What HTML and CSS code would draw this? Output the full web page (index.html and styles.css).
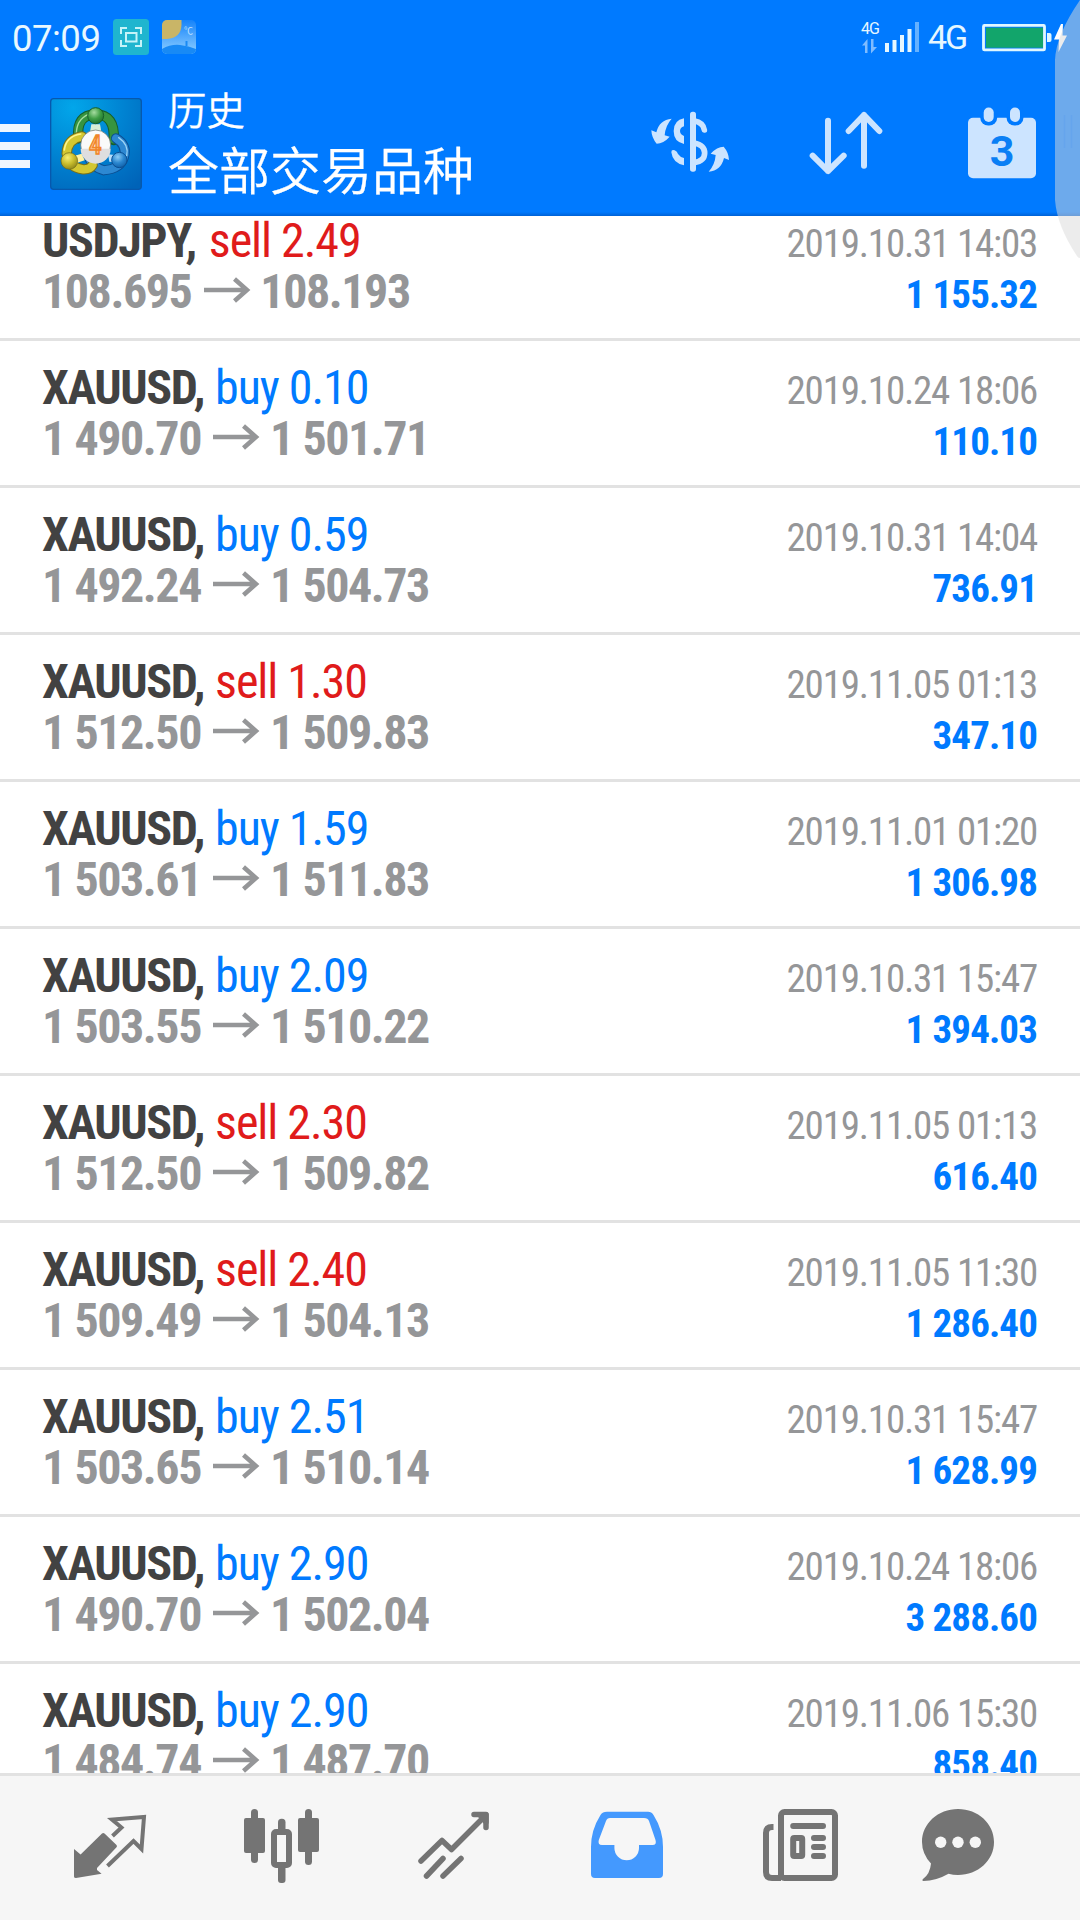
FILE: index.html
```html
<!DOCTYPE html>
<html lang="zh-CN">
<head>
<meta charset="utf-8">
<title>历史</title>
<link rel="stylesheet" href="styles.css">
</head>
<body>
<header class="header">
  <div class="status">
    <div class="status-left">
      <span class="clock">07:09</span>
      <svg class="badge-capture" viewBox="0 0 36 36"><rect width="36" height="36" rx="3.5" fill="#1fb5cf"/><g fill="none" stroke="#c5f3f8" stroke-width="2"><path d="M8 15V9h6M22 9h6v6M28 21v6h-6M14 27H8v-6"/><rect x="13" y="14" width="10.500" height="8.500"/></g></svg>
      <svg class="badge-weather" viewBox="0 0 34 34">
        <defs>
          <linearGradient id="sky" x1="0" y1="0" x2="0" y2="1"><stop offset="0" stop-color="#1683fa"/><stop offset=".85" stop-color="#7cc4ff"/></linearGradient>
          <clipPath id="wclip"><rect width="34" height="34" rx="5"/></clipPath>
        </defs>
        <g clip-path="url(#wclip)"><rect width="34" height="34" fill="url(#sky)"/><path d="M0 0H19.500V5Q19 18 5 19H0Z" fill="#c9b567"/><path d="M0 29Q9 24 18 25T34 29V34H0ZM23.500 21h2v5h-2z" fill="#188af5"/></g>
        <text x="22" y="13.500" class="degree">℃</text>
      </svg>
    </div>
    <div class="status-right">
      <div class="net"><span class="net-small">4G</span><svg width="16" height="15" viewBox="0 0 16 15" fill="#7fbcff"><path d="M0 6.500L5.500 0V14H3V6.500ZM15 8L9 14.500V0h2.500V8Z"/></svg></div>
      <svg class="bars" width="34" height="30" viewBox="0 0 34 30" fill="#e6f7ff"><path d="M0 21h4v9H0zM7.500 18h4v12h-4zM15 13h4v17h-4zM22.500 7h4v23h-4z"/><path d="M30 0h4v30h-4z" fill="#66b2ff"/></svg>
      <span class="net-big">4G</span>
      <svg class="battery" width="86" height="28" viewBox="982 24 86 28"><rect x="983.500" y="25.400" width="61" height="24.500" rx="1" fill="#007aff" stroke="#dff7ff" stroke-width="2.800"/><rect x="986" y="27.700" width="57" height="20" fill="#12a56b"/><path d="M1047 33h2.500q2 0 2 2v5q0 2-2 2H1047z" fill="#dff7ff"/><path d="M1061 24L1054 39.500H1059L1058.500 52L1067 35.500H1062.500L1063 24Z" fill="#fff"/></svg>
    </div>
  </div>
  <div class="toolbar">
    <div class="menu"><i></i><i></i><i></i></div>
    <svg class="logo" viewBox="30 39 276 276">
      <defs>
        <radialGradient id="lbg" cx=".25" cy=".1" r="1.1"><stop offset="0" stop-color="#02a6ea"/><stop offset=".5" stop-color="#0083d2"/><stop offset="1" stop-color="#0063b8"/></radialGradient>
        <radialGradient id="gg" cx=".4" cy=".3" r=".8"><stop offset="0" stop-color="#a5dca0"/><stop offset=".5" stop-color="#3f9e45"/><stop offset="1" stop-color="#17682a"/></radialGradient>
        <radialGradient id="yg" cx=".4" cy=".3" r=".8"><stop offset="0" stop-color="#f7ef72"/><stop offset=".5" stop-color="#c6bb2c"/><stop offset="1" stop-color="#837b18"/></radialGradient>
        <radialGradient id="bg" cx=".4" cy=".3" r=".8"><stop offset="0" stop-color="#8cccf5"/><stop offset=".5" stop-color="#2a86cf"/><stop offset="1" stop-color="#0b58a0"/></radialGradient>
      </defs>
      <rect x="32" y="41" width="272" height="272" rx="9" fill="url(#lbg)" stroke="#0758ad" stroke-width="4"/>
      <g fill="none" stroke-linecap="round">
        <path d="M115 160Q108 88 167 88T221 165" stroke="#165f2c" stroke-width="31"/><path d="M115 158Q108 89 167 89T221 163" stroke="#379440" stroke-width="25"/><path d="M109 150Q108 104 145 88" stroke="#a6dda0" stroke-width="4"/>
        <path d="M228 160Q262 180 252 216T192 256Q155 246 144 210" stroke="#0b4f93" stroke-width="30"/><path d="M228 160Q262 180 252 216T192 256Q155 246 144 210" stroke="#2d88d2" stroke-width="24"/><path d="M236 158Q268 180 260 212" stroke="#9bd3f5" stroke-width="4"/>
        <path d="M126 154Q82 162 80 205Q86 248 130 253Q150 254 158 240" stroke="#77701a" stroke-width="31"/><path d="M126 154Q82 162 80 205Q86 248 130 253Q150 254 158 240" stroke="#d3c731" stroke-width="25"/><path d="M122 147Q78 154 73 195" stroke="#fff48a" stroke-width="5"/>
      </g>
      <path d="M154 118H180L184 140H150Z" fill="#d9eed5"/><path d="M104 212L125 206L134 226L110 234Z" fill="#fff3a5"/><path d="M204 208L225 210V232L208 230Z" fill="#b7defb"/>
      <circle cx="167" cy="92" r="24" fill="url(#gg)" stroke="#165f2c" stroke-width="3"/>
      <circle cx="88" cy="228" r="25" fill="url(#yg)" stroke="#6d681a" stroke-width="2"/>
      <circle cx="238" cy="225" r="23" fill="url(#bg)" stroke="#0b4f93" stroke-width="3"/>
      <circle cx="167" cy="180" r="45" fill="#fafafa" stroke="#5d6a62" stroke-width="2"/><path d="M122 191H212A45 45 0 0 1 122 191Z" fill="#dededf"/>
      <text x="166" y="207" class="logo-num">4</text>
    </svg>
    <div class="titles"><div class="title">历史</div><div class="subtitle">全部交易品种</div></div>
    <svg class="act-dollar" width="80" height="62" viewBox="30 34 240 186" fill="#cce4ff">
      <rect x="150" y="36" width="18" height="180" rx="8"/>
      <path d="M132 56Q101 62 101 94T132 133V109Q120 104 120 94T132 80Z"/>
      <path d="M94 158Q94 148 104 152Q112 155 114 163Q120 172 132 175V197Q98 190 94 158Z"/>
      <path d="M162 63Q190 68 193 91M162 130Q194 136 194 160T162 189" fill="none" stroke="#cce4ff" stroke-width="17" stroke-linecap="round"/>
      <path id="swing" d="M95 57Q58 60 49 98L34 92Q35 115 50 132Q70 132 89 111L74 107Q76 78 95 57Z"/>
      <use href="#swing" transform="rotate(180 150.500 136.500)"/>
    </svg>
    <svg class="act-sort" width="74" height="64" viewBox="507 34 222 192" fill="none" stroke="#cce4ff" stroke-width="18" stroke-linecap="round" stroke-linejoin="round"><path d="M564 63V214M518 168L564 214L611 168M672 198V46M626 94L672 46L718 94"/></svg>
    <svg class="act-cal" width="70" height="72" viewBox="967 107 70 72"><rect x="968" y="117.700" width="68" height="60.500" rx="5" fill="#cce4ff"/><g fill="#007aff"><rect x="980.200" y="104" width="17" height="21.500" rx="8"/><rect x="1006.500" y="104" width="17" height="21.500" rx="8"/></g><g fill="#cce4ff"><rect x="983.700" y="107.500" width="10" height="14.500" rx="5"/><rect x="1010" y="107.500" width="10" height="14.500" rx="5"/></g><text x="1002" y="165.500" class="cal-num">3</text></svg>
  </div>
</header>
<main class="list" id="list"></main>
<nav class="tabs">
  <svg class="tab" viewBox="24 1776 172 144"><path fill="#747474" d="M74 1849L80.600 1854.500L102 1833.500Q103.300 1832.300 104.500 1833.500L116.500 1845Q117.500 1846.200 116.500 1847.300L97 1868V1870L101.600 1873.700L76 1878Q74 1878 74 1876.500Z"/><path fill="none" stroke="#747474" stroke-width="4" d="M112.500 1836L121.500 1827.500L112 1819.500L144 1817L141.500 1849L133.500 1841L107.500 1866"/></svg>
  <svg class="tab" viewBox="196 1776 172 144" fill="#747474"><rect x="244" y="1818" width="21" height="35" rx="2"/><rect x="251" y="1809" width="7" height="54" rx="3.500"/><rect x="278" y="1818.700" width="7.500" height="15" rx="3.500"/><rect x="278" y="1864" width="7.500" height="19" rx="3"/><rect x="274" y="1832" width="15" height="33" rx="2" fill="none" stroke="#747474" stroke-width="6"/><rect x="298" y="1818" width="21" height="34" rx="2"/><rect x="305" y="1809" width="7" height="56" rx="3.500"/></svg>
  <svg class="tab" viewBox="368 1776 172 144" fill="none" stroke="#747474" stroke-width="5.500" stroke-linecap="round" stroke-linejoin="round"><path d="M421 1861L442 1840.500L451.500 1849.500L485 1816M474 1814.500H486V1827.500M426.500 1876L443 1858.500M443 1876L461 1858.500"/><path d="M480 1815H486V1822Z"/></svg>
  <svg class="tab" viewBox="540 1776 172 144"><path fill="#4499fe" fill-rule="evenodd" d="M607 1811.700H648Q651.500 1811.700 653.500 1815Q663 1830 663 1847V1874Q663 1878 659 1878H595Q591 1878 591 1874V1847Q591 1830 600.500 1815Q602.500 1811.700 607 1811.700ZM610 1818Q607 1818 606 1821L598.800 1840Q597.500 1845 602 1845H614.400V1848A12.300 12.300 0 0 0 639 1848V1845H652.500Q657 1845 655.500 1840L649 1821Q648 1818 644 1818Z"/></svg>
  <svg class="tab" viewBox="712 1776 172 144" fill="none" stroke="#747474" stroke-width="6"><rect x="781" y="1812" width="54" height="66" rx="3.500"/><path d="M773.500 1827H772Q766 1827 766 1833V1872Q766 1878 772 1878H781"/><path stroke-linecap="round" d="M793.200 1826H823M814 1838H823M814 1847H823M814 1856H823"/><rect x="793.200" y="1838" width="9" height="18" rx="1"/></svg>
  <svg class="tab" viewBox="884 1776 172 144"><path fill="#747474" d="M958 1809C978 1809 994 1823.500 994 1842S978 1875 958 1875Q953 1875 948.500 1873.800Q936 1881 923.500 1881Q921.500 1880.500 923 1879Q930 1874 931 1863.500Q922 1854 922 1842C922 1823.500 938 1809 958 1809Z"/><g fill="#f6f6f6"><circle cx="940.700" cy="1842.300" r="5.700"/><circle cx="958" cy="1842.300" r="5.700"/><circle cx="975.300" cy="1842.300" r="5.700"/></g></svg>
</nav>
<svg class="edge-handle" width="26" height="258" viewBox="1054 0 26 258"><path d="M1080 0Q1056 35 1055 60V200Q1057 226 1077 256Q1078 258 1080 258Z" fill="rgba(217,217,217,.5)"/><path d="M1064.500 115v33M1071.500 115v33" stroke="rgba(80,150,240,.25)" stroke-width="1.500"/></svg>
<script src="list.js"></script>
</body>
</html>
```
FILE: styles.css
```css
* { box-sizing: border-box; }
body {
  margin: 0;
  width: 1080px;
  height: 1920px;
  overflow: hidden;
  position: relative;
  display: flex;
  flex-direction: column;
  background: #fff;
  font-family: "Roboto Condensed", Roboto, "Noto Sans CJK SC", sans-serif;
}
svg { display: block; flex: none; }

.header {
  flex: none;
  height: 216px;
  background: linear-gradient(#007aff 212px, #0062d6 216px);
}
.status {
  height: 76px;
  display: flex;
  justify-content: space-between;
  padding: 0 12px 0 11px;
}
.status-left { display: flex; }
.clock {
  width: 102px;
  padding: 17px 0 0 1px;
  font: 400 36.500px/44px Roboto, sans-serif;
  letter-spacing: -.500px;
  color: #e9f8ff;
}
.badge-capture { width: 36px; height: 36px; margin-top: 19px; }
.badge-weather { width: 34px; height: 34px; margin: 20px 0 0 13px; }
.degree { font: 9px "Noto Sans CJK SC", sans-serif; fill: #bfe0ff; }
.status-right { display: flex; color: #e6f7ff; }
.net { width: 24px; padding-top: 20px; display: flex; flex-direction: column; gap: 2px; }
.net svg { margin-left: 1px; }
.net-small { font: 16px/17px Roboto, sans-serif; letter-spacing: -1px; }
.bars { margin-top: 22px; }
.net-big {
  width: 54px;
  padding: 18px 0 0 9px;
  font: 34px/38px Roboto, sans-serif;
  letter-spacing: -2px;
}
.battery { margin: 24px 0 0 9px; }

.toolbar { display: flex; align-items: flex-start; }
.menu { width: 30px; padding-top: 48px; display: grid; gap: 10px; }
.menu i { height: 8px; background: #eff6ff; }
.logo { width: 92px; height: 92px; margin: 22px 0 0 20px; }
.logo-num {
  font: 500 76px "Roboto Condensed", Roboto, sans-serif;
  fill: #ffc488;
  stroke: #f0852a;
  stroke-width: 4px;
  text-anchor: middle;
}
.titles {
  width: 482px;
  padding: 10px 0 0 26px;
  color: #fff;
  font-family: "Noto Sans CJK SC", sans-serif;
  font-weight: 350;
  -webkit-text-stroke: .300px #fff;
}
.title { font-size: 38.500px; line-height: 44px; }
.subtitle { font-size: 51px; line-height: 60px; margin-top: 8px; }
.act-dollar { margin: 35px 0 0 26px; }
.act-sort { margin: 35px 0 0 79px; }
.act-cal { margin: 31px 0 0 84px; }
.cal-num {
  font: 700 43px Roboto, sans-serif;
  fill: #0a7ff5;
  text-anchor: middle;
}

.list { flex: 1; min-height: 0; overflow: hidden; }
.row {
  height: 147px;
  padding: 21px 42px 0;
  border-bottom: 3px solid #e2e2e2;
}
.row:first-child { margin-top: -22px; }
.line {
  height: 51px;
  display: flex;
  justify-content: space-between;
  align-items: baseline;
  line-height: 51px;
  white-space: nowrap;
}
.deal { font-size: 48px; }
.symbol { font-weight: 700; color: #424242; letter-spacing: -1.400px; }
.side { margin-left: 11px; letter-spacing: -1.050px; }
.row:first-child .side { margin-left: 13px; }
.buy { color: #007aff; }
.sell { color: #e01b1b; }
.price {
  display: flex;
  align-items: baseline;
  font-size: 48px;
  font-weight: 700;
  letter-spacing: -1.450px;
  color: #959698;
}
.arrow { width: 47px; height: 31px; margin: 0 9.500px 0 12.500px; }
.date { font-size: 39px; letter-spacing: -1.200px; margin-right: 1px; color: #959698; }
.profit { font-size: 39px; font-weight: 700; letter-spacing: -.900px; margin-right: 1px; color: #007aff; }

.tabs {
  flex: none;
  height: 147px;
  display: flex;
  padding-left: 24px;
  border-top: 3px solid #e2e2e2;
  background: #f6f6f6;
}
.tab { width: 172px; height: 144px; }
.edge-handle { position: absolute; top: 0; right: 0; }
```
FILE: list.js
```js
const deals = [
  ["USDJPY", "sell", "2.49", "108.695", "108.193", "2019.10.31 14:03", "1 155.32"],
  ["XAUUSD", "buy", "0.10", "1 490.70", "1 501.71", "2019.10.24 18:06", "110.10"],
  ["XAUUSD", "buy", "0.59", "1 492.24", "1 504.73", "2019.10.31 14:04", "736.91"],
  ["XAUUSD", "sell", "1.30", "1 512.50", "1 509.83", "2019.11.05 01:13", "347.10"],
  ["XAUUSD", "buy", "1.59", "1 503.61", "1 511.83", "2019.11.01 01:20", "1 306.98"],
  ["XAUUSD", "buy", "2.09", "1 503.55", "1 510.22", "2019.10.31 15:47", "1 394.03"],
  ["XAUUSD", "sell", "2.30", "1 512.50", "1 509.82", "2019.11.05 01:13", "616.40"],
  ["XAUUSD", "sell", "2.40", "1 509.49", "1 504.13", "2019.11.05 11:30", "1 286.40"],
  ["XAUUSD", "buy", "2.51", "1 503.65", "1 510.14", "2019.10.31 15:47", "1 628.99"],
  ["XAUUSD", "buy", "2.90", "1 490.70", "1 502.04", "2019.10.24 18:06", "3 288.60"],
  ["XAUUSD", "buy", "2.90", "1 484.74", "1 487.70", "2019.11.06 15:30", "858.40"]
];
const arrow = '<svg class="arrow" viewBox="0 0 47 31" fill="none" stroke="#959698" stroke-width="4.500"><path d="M0 13H43M30.500 2L43 13L30.500 24"/></svg>';
document.getElementById("list").innerHTML = deals.map(([sym, side, lots, open, close, date, profit]) => `
  <section class="row">
    <div class="line"><div class="deal"><span class="symbol">${sym},</span><span class="side ${side}">${side} ${lots}</span></div><span class="date">${date}</span></div>
    <div class="line"><div class="price"><span>${open}</span>${arrow}<span>${close}</span></div><span class="profit">${profit}</span></div>
  </section>`).join("");
```
